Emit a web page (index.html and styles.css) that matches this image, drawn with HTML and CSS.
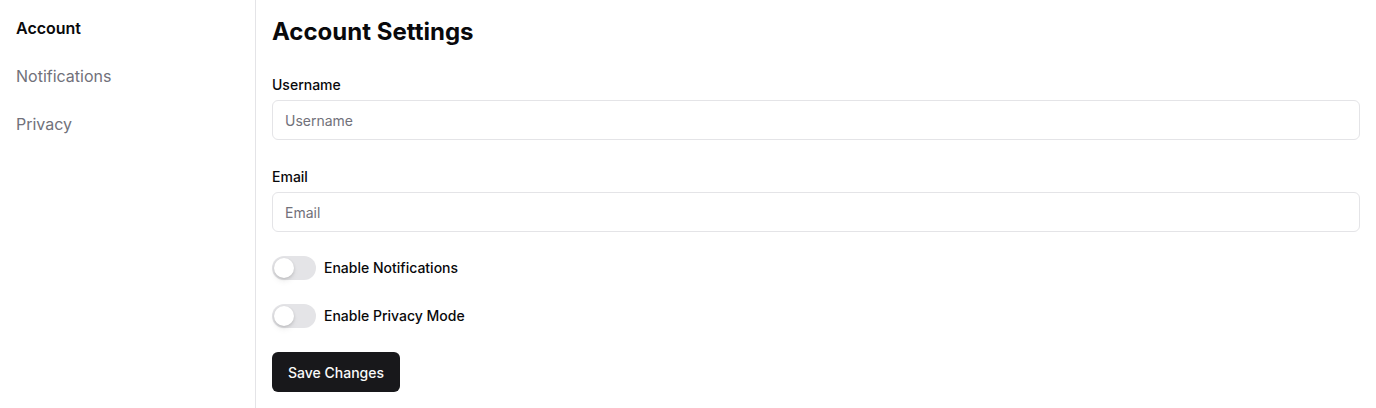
FILE: index.html
```html
<!DOCTYPE html>
<html lang="en">
<head>
<meta charset="utf-8">
<title>Account Settings</title>
<link rel="stylesheet" href="styles.css">
</head>
<body>
<div class="layout">
  <aside class="sidebar">
    <nav class="nav">
      <a class="nav-item active">Account</a>
      <a class="nav-item">Notifications</a>
      <a class="nav-item">Privacy</a>
    </nav>
  </aside>
  <main class="main">
    <h1 class="title">Account Settings</h1>
    <form class="form">
      <div class="field">
        <label class="label" for="username">Username</label>
        <input class="input" id="username" type="text" placeholder="Username">
      </div>
      <div class="field">
        <label class="label" for="email">Email</label>
        <input class="input" id="email" type="email" placeholder="Email">
      </div>
      <div class="toggle-row">
        <span class="switch"><span class="knob"></span></span>
        <span class="toggle-label">Enable Notifications</span>
      </div>
      <div class="toggle-row">
        <span class="switch"><span class="knob"></span></span>
        <span class="toggle-label">Enable Privacy Mode</span>
      </div>
      <div>
        <button class="button" type="button">Save Changes</button>
      </div>
    </form>
  </main>
</div>
</body>
</html>
```
FILE: styles.css
```css
* { box-sizing: border-box; }
html, body { margin: 0; padding: 0; }
body {
  font-family: Inter, "Liberation Sans", sans-serif;
  color: #09090b;
  background: #fff;
}
.layout {
  display: flex;
  min-height: 408px;
}
.sidebar {
  width: 256px;
  flex-shrink: 0;
  border-right: 1px solid #e4e4e7;
  padding: 16px;
}
.nav {
  display: flex;
  flex-direction: column;
  gap: 24px;
}
.nav-item {
  font-size: 16px;
  line-height: 24px;
  color: #71717a;
}
.nav-item.active {
  color: #09090b;
  font-weight: 600;
}
.main {
  flex: 1;
  padding: 16px;
}
.title {
  margin: 0 0 24px;
  font-size: 24px;
  line-height: 32px;
  font-weight: 700;
}
.form {
  display: flex;
  flex-direction: column;
  gap: 24px;
}
.field {
  display: flex;
  flex-direction: column;
  gap: 8px;
}
.label {
  margin-top: 6px;
  font-size: 14px;
  line-height: 14px;
  font-weight: 500;
}
.input {
  height: 40px;
  border: 1px solid #e4e4e7;
  border-radius: 6px;
  padding: 0 12px;
  font-family: inherit;
  font-size: 14px;
  color: #09090b;
  outline: none;
}
.input::placeholder { color: #71717a; }
.toggle-row {
  display: flex;
  align-items: center;
  gap: 8px;
  height: 24px;
}
.switch {
  width: 44px;
  height: 24px;
  border-radius: 12px;
  background: #e4e4e7;
  padding: 2px;
  display: flex;
  align-items: center;
}
.knob {
  width: 20px;
  height: 20px;
  border-radius: 50%;
  background: #fff;
  box-shadow: 0 1px 3px rgba(0,0,0,0.15), 0 4px 6px -1px rgba(0,0,0,0.08);
}
.toggle-label {
  font-size: 14px;
  line-height: 20px;
  font-weight: 500;
}
.button {
  height: 40px;
  padding: 0 16px;
  border: none;
  border-radius: 6px;
  background: #18181b;
  color: #fafafa;
  font-family: inherit;
  font-size: 14px;
  font-weight: 500;
}
```
